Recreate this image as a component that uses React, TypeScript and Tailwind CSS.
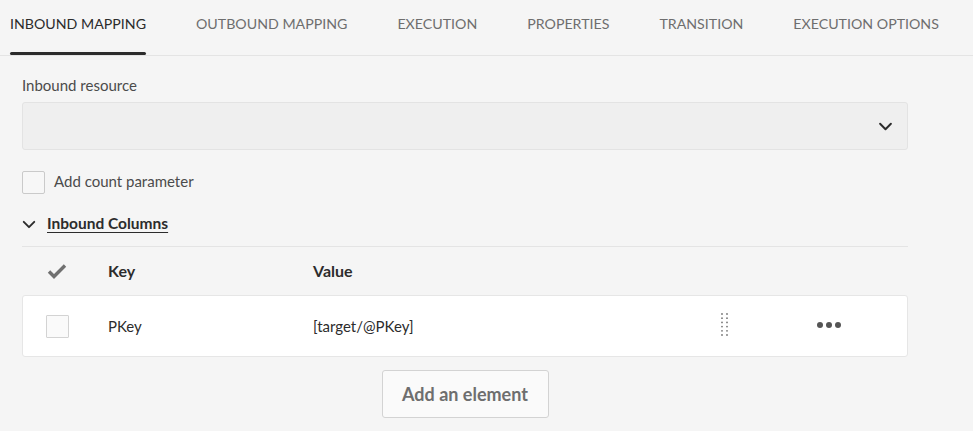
import React from "react";

const tabs = ["INBOUND MAPPING", "OUTBOUND MAPPING", "EXECUTION", "PROPERTIES", "TRANSITION", "EXECUTION OPTIONS"];

function Chevron({ className = "" }: { className?: string }) {
  return (
    <svg viewBox="0 0 16 10" className={className} fill="none" stroke="currentColor" strokeWidth="2.2" strokeLinecap="round" strokeLinejoin="round">
      <path d="M2 2l6 6 6-6" />
    </svg>
  );
}

function Grip() {
  const dots = [];
  for (let r = 0; r < 6; r++) {
    for (let c = 0; c < 2; c++) {
      dots.push(<circle key={`${r}-${c}`} cx={1 + c * 5} cy={1 + r * 4.2} r="0.9" fill="#777" />);
    }
  }
  return (
    <svg width="7" height="23" viewBox="0 0 7 23">
      {dots}
    </svg>
  );
}

export default function App() {
  return (
    <div className="w-[973px] h-[431px] bg-[#f5f5f5] overflow-hidden" style={{ fontFamily: "Lato, 'Liberation Sans', sans-serif" }}>
      <div className="flex h-[56px] border-b border-[#e4e4e4] pl-[10px] whitespace-nowrap">
        {tabs.map((t, i) => (
          <div key={t} className="mr-[50px] flex flex-col shrink-0">
            <div className={`h-[52px] pb-[4px] flex items-center text-[14.2px] ${i === 0 ? "text-[#2c2c2c]" : "text-[#6e6e6e]"}`}>{t}</div>
            {i === 0 && <div className="h-[2.5px] bg-[#2c2c2c] rounded-full" />}
          </div>
        ))}
      </div>
      <div className="pl-[22px] w-[908px]">
        <div className="pt-[20px] text-[15px] text-[#4b4b4b] leading-[18px]">Inbound resource</div>
        <div className="mt-[8px] h-[48px] bg-[#efefef] border border-[#e3e3e3] rounded-[3px] flex items-center justify-end pr-[14px]">
          <Chevron className="w-[15px] h-[9px] text-[#2c2c2c]" />
        </div>
        <div className="mt-[21px] flex items-center h-[23px]">
          <div className="w-[23px] h-[23px] border border-[#cacaca] bg-[#f7f7f7] rounded-[2px]" />
          <span className="ml-[9px] -mt-[2px] text-[15px] text-[#4b4b4b]">Add count parameter</span>
        </div>
        <div className="mt-[19px] flex items-center h-[22px]">
          <Chevron className="w-[14px] h-[9px] text-[#2c2c2c]" />
          <span className="ml-[11px] text-[15.5px] font-bold text-[#2c2c2c] underline underline-offset-[3px]">Inbound Columns</span>
        </div>
        <div className="mt-[11px] border-t border-[#e4e4e4]" />
        <div className="h-[48px] flex items-center">
          <div className="w-[86px] pl-[25px] flex items-center">
            <svg width="20" height="16" viewBox="0 0 20 16"><path d="M2 8.5l5 5L18 2.5" fill="none" stroke="#707070" strokeWidth="3.4" strokeLinejoin="miter" /></svg>
          </div>
          <div className="w-[205px] text-[16px] font-bold text-[#2c2c2c]">Key</div>
          <div className="text-[16px] font-bold text-[#2c2c2c]">Value</div>
        </div>
        <div className="h-[62px] bg-white border border-[#e6e6e6] rounded-[3px] flex items-center">
          <div className="w-[85px] pl-[23px]">
            <div className="w-[23px] h-[23px] border border-[#d3d3d3] bg-[#fafafa] rounded-[1px]" />
          </div>
          <div className="w-[205px] text-[15px] text-[#2c2c2c]">PKey</div>
          <div className="w-[408px] text-[15px] text-[#2c2c2c]">[target/@PKey]</div>
          <div className="w-[96px] -mt-[3px] flex"><Grip /></div>
          <div className="flex gap-[3px] -mt-[3px]">
            <span className="w-[6px] h-[6px] rounded-full bg-[#555]" />
            <span className="w-[6px] h-[6px] rounded-full bg-[#555]" />
            <span className="w-[6px] h-[6px] rounded-full bg-[#555]" />
          </div>
        </div>
        <div className="flex justify-center mt-[13px]">
          <button className="w-[167px] h-[48px] border border-[#d3d3d3] bg-[#fafafa] rounded-[3px] text-[18px] font-bold text-[#6e6e6e]">Add an element</button>
        </div>
      </div>
    </div>
  );
}
